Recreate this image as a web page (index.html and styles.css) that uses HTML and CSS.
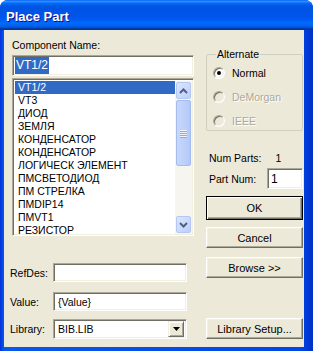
FILE: index.html
```html
<!DOCTYPE html>
<html lang="ru">
<head>
    <meta charset="UTF-8">
    <title>Place Part</title>
    <link rel="stylesheet" href="styles.css">
</head>
<body>
    <div class="window">
        <div class="titlebar">
            <span class="title">Place Part</span>
        </div>
        <div class="client">
            <div class="left-col">
                <div class="label">Component Name:</div>
                <div class="field name-field"><span class="sel-text">VT1/2</span></div>
                <div class="listbox">
                    <ul class="items">
                        <li class="selected">VT1/2</li>
                        <li>VT3</li>
                        <li>ДИОД</li>
                        <li>ЗЕМЛЯ</li>
                        <li>КОНДЕНСАТОР</li>
                        <li>КОНДЕНСАТОР</li>
                        <li>ЛОГИЧЕСК ЭЛЕМЕНТ</li>
                        <li>ПМСВЕТОДИОД</li>
                        <li>ПМ СТРЕЛКА</li>
                        <li>ПМDIP14</li>
                        <li>ПМVT1</li>
                        <li>РЕЗИСТОР</li>
                    </ul>
                    <div class="scrollbar">
                        <div class="sb-btn">
                            <svg width="9" height="6" viewBox="0 0 9 6"><polyline points="1,5 4.5,1.5 8,5" fill="none" stroke="#4d6185" stroke-width="2"/></svg>
                        </div>
                        <div class="sb-track">
                            <div class="sb-thumb">
                                <span class="grip"></span>
                                <span class="grip"></span>
                                <span class="grip"></span>
                                <span class="grip"></span>
                            </div>
                        </div>
                        <div class="sb-btn">
                            <svg width="9" height="6" viewBox="0 0 9 6"><polyline points="1,1 4.5,4.5 8,1" fill="none" stroke="#4d6185" stroke-width="2"/></svg>
                        </div>
                    </div>
                </div>

                <div class="form-row refdes-row">
                    <span class="row-label">RefDes:</span>
                    <div class="field row-field"></div>
                </div>
                <div class="form-row value-row">
                    <span class="row-label">Value:</span>
                    <div class="field row-field">{Value}</div>
                </div>
                <div class="form-row library-row">
                    <span class="row-label">Library:</span>
                    <div class="field row-field combo">
                        <span class="combo-text">BIB.LIB</span>
                        <span class="combo-btn">
                            <svg width="7" height="4" viewBox="0 0 7 4"><polygon points="0,0 7,0 3.5,4" fill="#000"/></svg>
                        </span>
                    </div>
                </div>
            </div>

            <div class="right-col">
                <fieldset class="group">
                    <legend>Alternate</legend>
                    <div class="radio-row">
                        <span class="radio checked"></span>Normal
                    </div>
                    <div class="radio-row disabled">
                        <span class="radio"></span>DeMorgan
                    </div>
                    <div class="radio-row disabled">
                        <span class="radio"></span>IEEE
                    </div>
                </fieldset>

                <div class="num-parts">
                    <span>Num Parts:</span>
                    <span class="num-value">1</span>
                </div>
                <div class="part-num">
                    <span>Part Num:</span>
                    <div class="field part-field">1</div>
                </div>

                <button class="btn default-btn">OK</button>
                <button class="btn cancel-btn">Cancel</button>
                <button class="btn browse-btn">Browse &gt;&gt;</button>
                <button class="btn setup-btn">Library Setup...</button>
            </div>
        </div>
    </div>
</body>
</html>
```

FILE: styles.css
```css
* {
    margin: 0;
    padding: 0;
    box-sizing: border-box;
}

body {
    width: 313px;
    height: 351px;
    overflow: hidden;
    font-family: 'Liberation Sans', Arial, sans-serif;
    font-size: 10.5px;
    color: #000;
    background: #fff;
}

.window {
    width: 313px;
    height: 351px;
    display: flex;
    flex-direction: column;
    background: linear-gradient(to right, #0831d9 0, #0046e8 2px, #0a57ea 4px, #0046e8 300px, #0030c8 313px);
    border-radius: 8px 8px 0 0;
    overflow: hidden;
}

.titlebar {
    height: 30px;
    flex-shrink: 0;
    padding-left: 6px;
    display: flex;
    align-items: center;
    background: linear-gradient(to bottom, #0058ee 0%, #3593ff 4%, #288eff 6%, #127dff 8%, #036ffc 10%, #0262ee 14%, #0057e5 20%, #0054e3 24%, #0055eb 56%, #005bf5 66%, #026afe 76%, #0062ef 86%, #0052d6 92%, #0040ab 94%, #003092 100%);
}

.title {
    color: #fff;
    font-weight: bold;
    font-size: 13px;
    text-shadow: 1px 1px #0f1089;
    margin-top: 2px;
}

.client {
    flex: 1;
    margin: 0 9px 4px 4px;
    background: #ece9d8;
    display: grid;
    grid-template-columns: 182px 97px;
    column-gap: 12px;
    padding: 9px 0 0 8px;
}

/* left column */

.left-col {
    display: flex;
    flex-direction: column;
}

.label {
    line-height: 13px;
}

.field {
    background: #fff;
    border: 1px solid;
    border-color: #aca899 #fff #fff #aca899;
    box-shadow: inset 1px 1px #716f64, inset -1px -1px #f1efe2;
}

.name-field {
    margin-top: 3px;
    height: 21px;
    padding: 2px 2px;
    display: flex;
    align-items: center;
    font-size: 12px;
}

.sel-text {
    background: #316ac5;
    color: #fff;
    line-height: 17px;
    padding: 0 1px;
}

.listbox {
    margin-top: 2px;
    height: 158px;
    display: flex;
    background: #fff;
    border: 1px solid;
    border-color: #aca899 #fff #fff #aca899;
    box-shadow: inset 1px 1px #716f64, inset -1px -1px #f1efe2;
    padding: 2px 1px 1px 2px;
}

.items {
    list-style: none;
    flex: 1;
}

.items li {
    height: 13px;
    line-height: 13px;
    padding-left: 3px;
    font-size: 10.5px;
}

.items li.selected {
    background: #316ac5;
    color: #fff;
}

.scrollbar {
    width: 17px;
    display: flex;
    flex-direction: column;
    background: #f6f5ef;
}

.sb-btn {
    height: 17px;
    margin: 1px;
    border: 1px solid #b5c8f4;
    border-radius: 2px;
    background: linear-gradient(to bottom right, #dce6fd, #bccefb);
    display: flex;
    align-items: center;
    justify-content: center;
}

.sb-track {
    flex: 1;
    padding: 0 1px;
}

.sb-thumb {
    height: 66px;
    border: 1px solid #a6bcf0;
    border-radius: 2px;
    background: linear-gradient(to right, #c8d8fc, #bdd0fb 60%, #b2c8fa);
    display: flex;
    flex-direction: column;
    align-items: center;
    justify-content: center;
    gap: 1px;
}

.grip {
    width: 7px;
    height: 1px;
    background: #eef3fe;
    box-shadow: 0 1px #8ca8ea;
}

.form-row {
    display: flex;
    align-items: center;
}

.row-label {
    width: 43px;
    flex-shrink: 0;
    margin-left: -2px;
}

.row-field {
    width: 134px;
    padding: 0 4px;
    display: flex;
    align-items: center;
}

.refdes-row {
    margin-top: 27px;
}

.refdes-row .row-field,
.value-row .row-field {
    height: 19px;
}

.value-row {
    margin-top: 10px;
}

.library-row {
    margin-top: 8px;
}

.combo {
    height: 20px;
    padding: 0 2px 0 4px;
    justify-content: space-between;
}

.combo-text {
    flex: 1;
}

.combo-btn {
    width: 16px;
    height: 16px;
    background: #ece9d8;
    border: 1px solid;
    border-color: #f1efe2 #716f64 #716f64 #f1efe2;
    box-shadow: inset 1px 1px #fff, inset -1px -1px #aca899;
    display: flex;
    align-items: center;
    justify-content: center;
}

/* right column */

.right-col {
    display: flex;
    flex-direction: column;
}

.group {
    margin-top: 9px;
    height: 83px;
    border: 1px solid #d0d0bf;
    border-radius: 2px;
    padding: 0 0 0 6px;
}

.group legend {
    padding: 0 1px;
    margin-left: 3px;
    line-height: 13px;
}

.radio-row {
    display: flex;
    align-items: center;
    height: 13px;
    margin-top: 11px;
}

.radio-row:first-of-type {
    margin-top: 5px;
}

.radio {
    width: 12px;
    height: 12px;
    border-radius: 50%;
    border: 1px solid;
    border-color: #aca899 #fff #fff #aca899;
    box-shadow: inset 1px 1px #716f64, inset -1px -1px #f1efe2;
    background: #fff;
    margin-right: 7px;
    position: relative;
}

.radio.checked::after {
    content: "";
    position: absolute;
    left: 3px;
    top: 3px;
    width: 4px;
    height: 4px;
    border-radius: 50%;
    background: #000;
}

.radio-row.disabled {
    color: #aca899;
    text-shadow: 1px 1px #fff;
}

.radio-row.disabled .radio {
    background: #ece9d8;
}

.num-parts {
    margin-top: 21px;
    line-height: 13px;
    padding-left: 3px;
    display: flex;
}

.num-value {
    margin-left: 14px;
}

.part-num {
    margin-top: 3px;
    display: flex;
    align-items: center;
    padding-left: 3px;
    justify-content: space-between;
}

.part-field {
    width: 36px;
    height: 21px;
    padding: 0 3px;
    display: flex;
    align-items: center;
    font-size: 12px;
}

.btn {
    font-family: inherit;
    font-size: 11px;
    color: #000;
    height: 21px;
    background: #ece9d8;
    border: 1px solid;
    border-color: #fff #716f64 #716f64 #fff;
    box-shadow: inset -1px -1px #aca899, inset 1px 1px #f1efe2;
}

.default-btn {
    margin-top: 7px;
    height: 24px;
    border: 1px solid #000;
    box-shadow: inset 1px 1px #fff, inset -1px -1px #716f64, inset -2px -2px #aca899;
}

.cancel-btn {
    margin-top: 7px;
}

.browse-btn {
    margin-top: 9px;
}

.setup-btn {
    margin-top: 40px;
}
```
